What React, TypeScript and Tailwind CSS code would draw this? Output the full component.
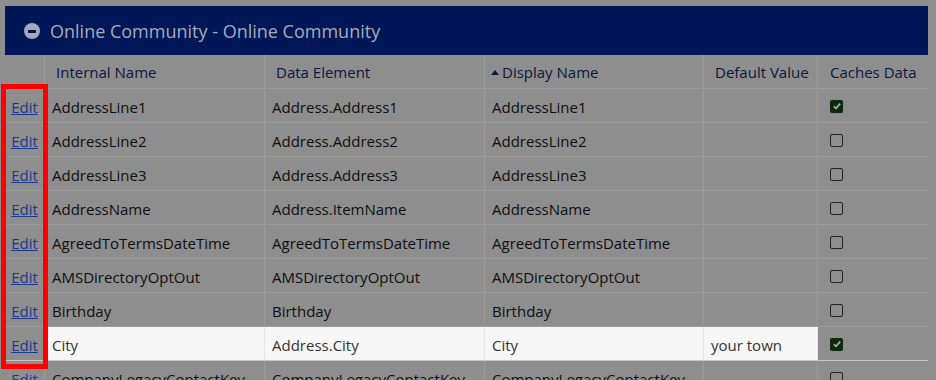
import React from "react";

type Row = {
  name: string;
  element: string;
  display: string;
  def?: string;
  caches: boolean;
  active?: boolean;
};

const rows: Row[] = [
  { name: "AddressLine1", element: "Address.Address1", display: "AddressLine1", caches: true },
  { name: "AddressLine2", element: "Address.Address2", display: "AddressLine2", caches: false },
  { name: "AddressLine3", element: "Address.Address3", display: "AddressLine3", caches: false },
  { name: "AddressName", element: "Address.ItemName", display: "AddressName", caches: false },
  { name: "AgreedToTermsDateTime", element: "AgreedToTermsDateTime", display: "AgreedToTermsDateTime", caches: false },
  { name: "AMSDirectoryOptOut", element: "AMSDirectoryOptOut", display: "AMSDirectoryOptOut", caches: false },
  { name: "Birthday", element: "Birthday", display: "Birthday", caches: false },
  { name: "City", element: "Address.City", display: "City", def: "your town", caches: true, active: true },
  { name: "CompanyLegacyContactKey", element: "CompanyLegacyContactKey", display: "CompanyLegacyContactKey", caches: false },
];

const cols = "grid grid-cols-[40px_220px_220px_219px_114px_110px]";

const Check = ({ on }: { on: boolean }) =>
  on ? (
    <span className="flex h-[13px] w-[13px] items-center justify-center rounded-[2px] bg-[#0b2a0b]">
      <svg viewBox="0 0 12 12" className="h-[10px] w-[10px]">
        <path d="M2.2 6.4 L4.8 8.9 L9.8 3.2" fill="none" stroke="#a9b2a9" strokeWidth="2" />
      </svg>
    </span>
  ) : (
    <span className="h-[13px] w-[13px] rounded-[2px] border border-[#222]" />
  );

const App = () => {
  return (
    <div
      className="h-[380px] w-[936px] overflow-hidden bg-[#8e8e8e] pt-[6px] pl-[5px]"
      style={{ fontFamily: '"Open Sans", "Noto Sans", sans-serif' }}
    >
      <div className="relative w-[923px]">
        <div className="flex h-[49px] items-center gap-[10px] bg-[#001656] pl-[19px] pt-[1px]">
          <span className="flex h-[16px] w-[16px] items-center justify-center rounded-full bg-[#a3a9b6]">
            <span className="h-[3px] w-[8px] bg-[#001656]" />
          </span>
          <span className="text-[18px] text-[#a5acbd]">Online Community - Online Community</span>
        </div>

        <div className={`${cols} h-[34px] items-center border-b border-[#9b9b9b] text-[15px] text-[#0b1640]`}>
          <div className="h-full border-r border-[#9b9b9b]" />
          <div className="flex h-full items-center border-r border-[#9b9b9b] pl-[11px] pt-[2px]">Internal Name</div>
          <div className="flex h-full items-center border-r border-[#9b9b9b] pl-[11px] pt-[2px]">Data Element</div>
          <div className="flex h-full items-center gap-[3px] border-r border-[#9b9b9b] pl-[6px] pt-[2px]">
            <svg viewBox="0 0 8 5" className="h-[5px] w-[8px]">
              <path d="M0 5 L4 0 L8 5 Z" fill="#0b1640" />
            </svg>
            Display Name
          </div>
          <div className="flex h-full items-center border-r border-[#9b9b9b] pl-[11px] pt-[2px]">Default Value</div>
          <div className="flex h-full items-center pl-[12px] pt-[2px]">Caches Data</div>
        </div>

        {rows.map((r) => {
          const cell = r.active
            ? "flex h-full items-center border-r border-[#e6e6e6] bg-[#f7f7f7] pl-[7px] pt-[3px] text-[#333]"
            : "flex h-full items-center border-r border-[#9b9b9b] pl-[7px] pt-[3px] text-[#0e0e0e]";
          return (
            <div
              key={r.name}
              className={`${cols} h-[34px] border-b text-[15px] ${r.active ? "border-[#c4c4c4]" : "border-[#9b9b9b]"}`}
            >
              <div className="flex h-full items-center justify-center border-r border-[#9b9b9b] bg-[#8e8e8e] pt-[3px]">
                <a href="#" className="text-[#1b3a8f] underline">Edit</a>
              </div>
              <div className={cell}>{r.name}</div>
              <div className={cell}>{r.element}</div>
              <div className={cell}>{r.display}</div>
              <div className={cell}>{r.def}</div>
              <div className="flex h-full items-center bg-[#8e8e8e] pl-[12px] pt-[1px]">
                <Check on={r.caches} />
              </div>
            </div>
          );
        })}

        <div className="pointer-events-none absolute top-[78px] left-[-4px] h-[285px] w-[47px] border-[5px] border-[#ff0000]" />
      </div>
    </div>
  );
};

export default App;
